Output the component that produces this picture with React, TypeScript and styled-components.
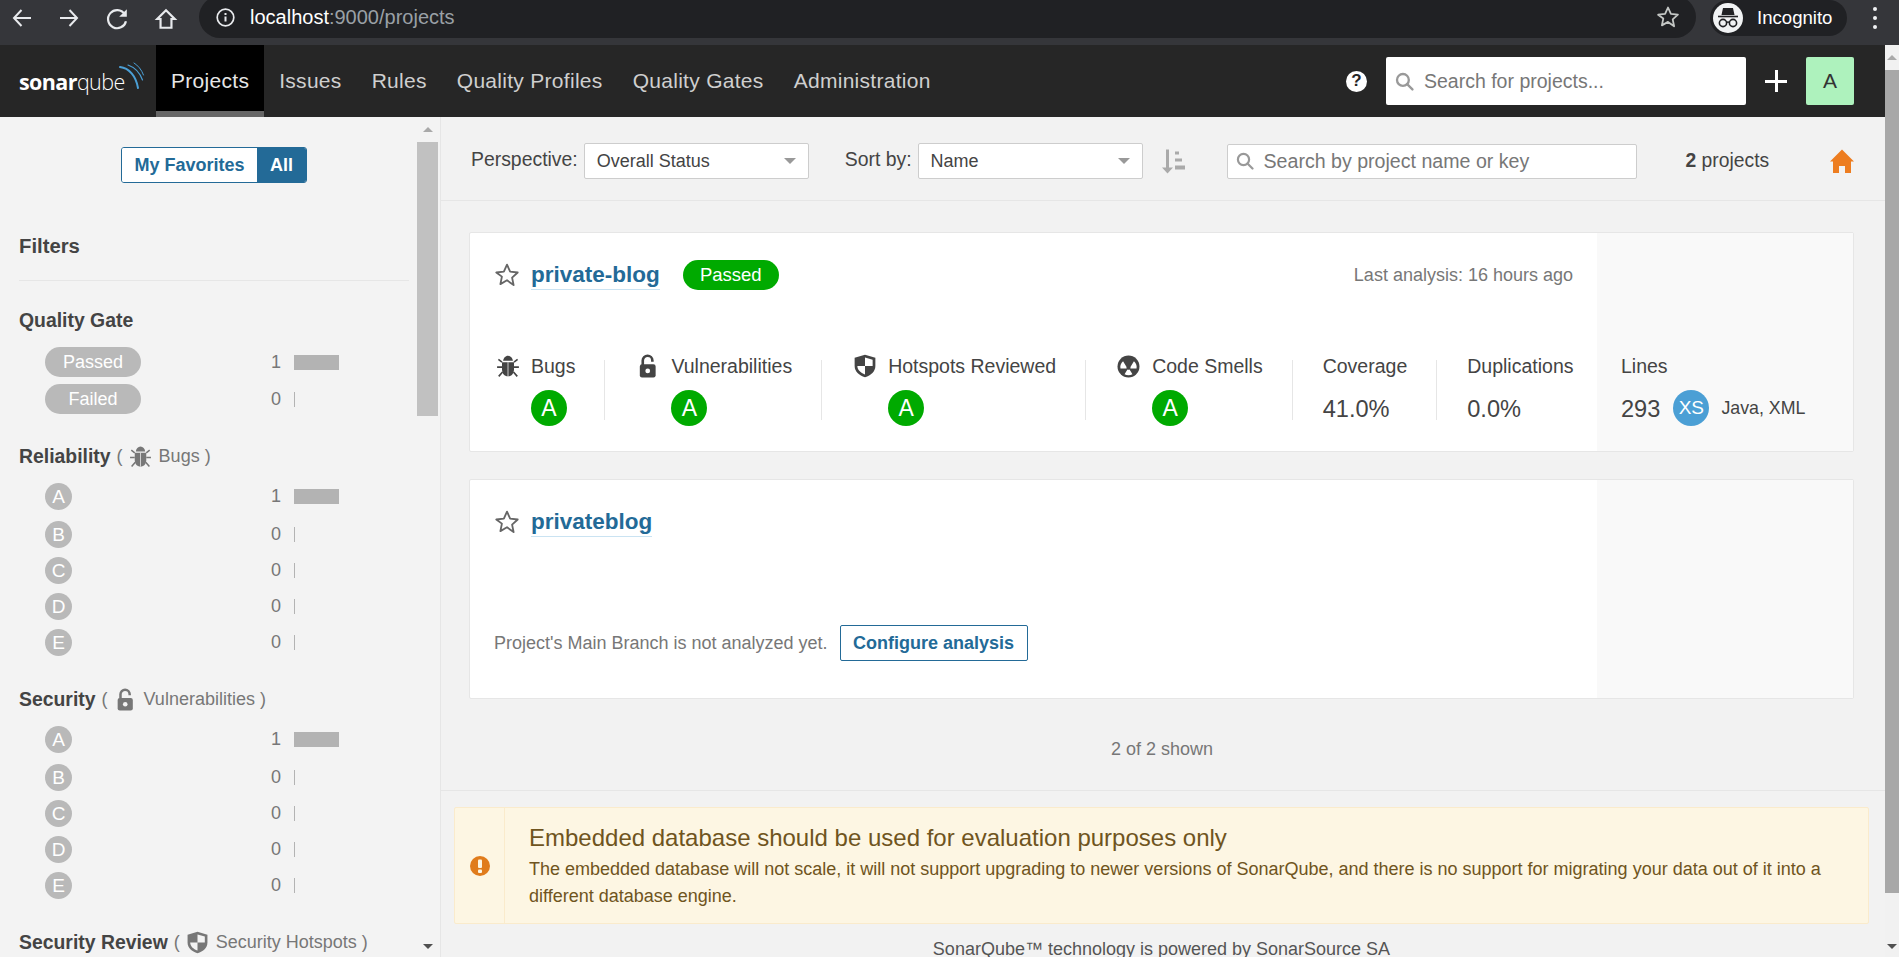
import { ReactNode } from "react";
import styled, { createGlobalStyle } from "styled-components";

const GlobalStyle = createGlobalStyle`
  html, body {
    margin: 0;
    height: 100%;
    overflow: hidden;
    background: #f3f3f3;
    font-family: "Liberation Sans", Arial, sans-serif;
    color: #444;
  }
  * { box-sizing: border-box; }
`;

const Screen = styled.div`
  width: 1899px;
  height: 957px;
  display: flex;
  flex-direction: column;
  overflow: hidden;
`;

/* browser chrome */
const BrowserBar = styled.div`
  height: 45px;
  flex: none;
  display: flex;
  background: #35363a;
  color: #fff;
`;

const NavIcons = styled.div`
  width: 199px;
  flex: none;
  display: flex;
  gap: 25px;
  padding: 7px 0 0 11px;
`;

const UrlPill = styled.div`
  width: 1497px;
  height: 42px;
  margin-top: -4px;
  border-radius: 21px;
  background: #202124;
  display: flex;
  align-items: center;
  padding: 0 16px 0 17px;
`;

const UrlText = styled.div`
  margin-left: 15px;
  flex: 1;
  font-size: 20px;
  color: #fff;
  span { color: #9aa0a6; }
`;

const ProfilePill = styled.div`
  width: 137px;
  height: 36px;
  margin-left: 14px;
  border-radius: 18px;
  background: #202124;
  display: flex;
  align-items: center;
  gap: 14px;
  padding-left: 3px;
  font-size: 18.6px;
`;

const ProfileFace = styled.div`
  width: 30px;
  height: 30px;
  border-radius: 50%;
  background: #f1f3f4;
  display: flex;
  align-items: center;
  justify-content: center;
`;

const Kebab = styled.div`
  margin: 7px 0 0 26px;
  display: flex;
  flex-direction: column;
  gap: 5px;
  i {
    width: 4px;
    height: 4px;
    border-radius: 50%;
    background: #f1f3f4;
  }
`;

const Viewport = styled.div`
  flex: 1;
  min-height: 0;
  display: flex;
`;

const Page = styled.div`
  flex: 1;
  min-width: 0;
  display: flex;
  flex-direction: column;
`;

/* top nav */
const NavBar = styled.nav`
  height: 72px;
  flex: none;
  display: flex;
  align-items: stretch;
  background: #262626;
`;

const Logo = styled.div`
  width: 156px;
  flex: none;
  display: flex;
  align-items: center;
  padding-left: 19px;
  position: relative;
  font-family: "Open Sans", sans-serif;
  font-size: 21.5px;
  letter-spacing: -0.6px;
  color: #fff;
  b { font-weight: 700; }
  span { font-weight: 300; }
  svg { position: absolute; left: 116px; top: 17px; }
`;

const NavTab = styled.a<{ $active?: boolean }>`
  display: flex;
  align-items: center;
  padding: 0 15px;
  font-size: 21px;
  letter-spacing: 0.29px;
  color: ${({ $active }) => ($active ? "#e6e6e6" : "#cfcfcf")};
  background: ${({ $active }) => ($active ? "#000" : "transparent")};
  border-bottom: 6px solid ${({ $active }) => ($active ? "#666" : "transparent")};
  padding-top: 6px;
`;

const NavRight = styled.div`
  margin-left: auto;
  display: flex;
  align-items: center;
  padding-right: 31px;
`;

const HelpIcon = styled.div`
  width: 21px;
  height: 21px;
  border-radius: 50%;
  background: #fff;
  color: #262626;
  font-size: 17px;
  font-weight: 700;
  display: flex;
  align-items: center;
  justify-content: center;
`;

const NavSearch = styled.div`
  width: 360px;
  height: 48px;
  margin-left: 19px;
  background: #fff;
  border-radius: 2px;
  display: flex;
  align-items: center;
  gap: 10px;
  padding-left: 9px;
  font-size: 19.5px;
  color: #777;
`;

const PlusIcon = styled.div`
  width: 22px;
  height: 22px;
  margin: 0 19px;
  position: relative;
  &::before, &::after {
    content: "";
    position: absolute;
    background: #fff;
  }
  &::before { left: 0; right: 0; top: 10px; height: 3px; }
  &::after { top: 0; bottom: 0; left: 10px; width: 3px; }
`;

const Avatar = styled.div`
  width: 48px;
  height: 48px;
  background: #aef2bd;
  border-radius: 2px;
  color: #333;
  font-size: 21px;
  display: flex;
  align-items: center;
  justify-content: center;
`;

const Content = styled.div`
  flex: 1;
  min-height: 0;
  display: flex;
`;

/* sidebar */
const Sidebar = styled.aside`
  width: 441px;
  flex: none;
  display: flex;
  background: #f3f3f3;
  border-right: 1px solid #e6e6e6;
  overflow: hidden;
`;

const SideContent = styled.div`
  width: 417px;
  flex: none;
  padding: 30px 8px 0 19px;
`;

const Toggle = styled.div`
  display: flex;
  width: 186px;
  height: 36px;
  margin-left: 102px;
  border: 1px solid #236a97;
  border-radius: 3px;
  overflow: hidden;
  font-size: 18px;
  font-weight: 700;
`;

const ToggleOption = styled.div<{ $on?: boolean }>`
  flex: ${({ $on }) => ($on ? "none" : 1)};
  width: ${({ $on }) => ($on ? "49px" : "auto")};
  display: flex;
  align-items: center;
  justify-content: center;
  color: ${({ $on }) => ($on ? "#fff" : "#236a97")};
  background: ${({ $on }) => ($on ? "#236a97" : "#fff")};
`;

const FiltersTitle = styled.h2`
  margin: 51px 0 0;
  padding-bottom: 22px;
  font-size: 20.3px;
  line-height: 24px;
  color: #444;
  border-bottom: 1px solid #e6e6e6;
`;

const FilterHeading = styled.h3<{ $top: number }>`
  margin: ${({ $top }) => $top}px 0 15px;
  height: 24px;
  display: flex;
  align-items: center;
  font-size: 19.4px;
  line-height: 24px;
  font-weight: 700;
  white-space: nowrap;
  color: #444;
`;

const FilterSub = styled.span`
  display: inline-flex;
  align-items: center;
  margin-left: 6px;
  font-size: 18px;
  font-weight: 400;
  color: #777;
`;

const FilterIconBox = styled.span`
  display: inline-flex;
  margin: 0 7px 0 6px;
`;

const FilterRow = styled.div<{ $tall?: boolean; $gap: number }>`
  display: flex;
  align-items: center;
  height: ${({ $tall }) => ($tall ? 30 : 27)}px;
  margin-bottom: ${({ $gap }) => $gap}px;
  padding-left: 26px;
  &:last-child { margin-bottom: 0; }
`;

const GatePill = styled.div`
  width: 96px;
  height: 30px;
  border-radius: 15px;
  background: #b9b9b9;
  color: #fff;
  font-size: 18px;
  display: flex;
  align-items: center;
  justify-content: center;
`;

const RatingDot = styled.div`
  width: 27px;
  height: 27px;
  border-radius: 50%;
  background: #b9b9b9;
  color: #fff;
  font-size: 19px;
  display: flex;
  align-items: center;
  justify-content: center;
`;

const FilterCount = styled.div`
  margin-left: auto;
  width: 30px;
  text-align: right;
  font-size: 18px;
  color: #777;
`;

const FilterBarSlot = styled.div`
  width: 115px;
  margin-left: 13px;
  flex: none;
`;

const FilterBar = styled.div<{ $full?: boolean }>`
  width: ${({ $full }) => ($full ? 45 : 1)}px;
  height: 15px;
  background: #b3b3b3;
`;

/* fake scrollbars */
const SideRail = styled.div`
  width: 21px;
  flex: none;
  display: flex;
  flex-direction: column;
  align-items: center;
  position: relative;
`;

const RailThumb = styled.div<{ $top: number; $height: number; $color: string }>`
  width: 100%;
  height: ${({ $height }) => $height}px;
  margin-top: ${({ $top }) => $top}px;
  background: ${({ $color }) => $color};
`;

const RailArrow = styled.div<{ $down?: boolean; $color: string }>`
  position: absolute;
  ${({ $down }) => ($down ? "bottom: 8px;" : "top: 10px;")}
  left: 50%;
  margin-left: -5px;
  width: 0;
  height: 0;
  border-left: 5px solid transparent;
  border-right: 5px solid transparent;
  ${({ $down, $color }) =>
    $down
      ? `border-top: 5px solid ${$color};`
      : `border-bottom: 5px solid ${$color};`}
`;

const PageRail = styled(SideRail)`
  width: 14px;
  background: #f1f1f1;
`;

/* main */
const Main = styled.main`
  flex: 1;
  min-width: 0;
  display: flex;
  flex-direction: column;
  overflow: hidden;
  background: #f2f2f2;
`;

const TopBar = styled.div`
  height: 84px;
  flex: none;
  display: flex;
  align-items: center;
  padding: 5px 0 0 30px;
  border-bottom: 1px solid #e6e6e6;
`;

const BarLabel = styled.span<{ $left?: number }>`
  margin-left: ${({ $left }) => $left ?? 0}px;
  margin-right: 6px;
  margin-top: -4px;
  font-size: 19.4px;
  color: #444;
`;

const SelectBox = styled.div<{ $width: number }>`
  width: ${({ $width }) => $width}px;
  height: 36px;
  background: #fff;
  border: 1px solid #cdcdcd;
  border-radius: 2px;
  display: flex;
  align-items: center;
  justify-content: space-between;
  padding: 0 12px 0 12px;
  font-size: 18px;
  color: #444;
  &::after {
    content: "";
    border-left: 6px solid transparent;
    border-right: 6px solid transparent;
    border-top: 6px solid #999;
  }
`;

const SortIcon = styled.div`
  margin-left: 19px;
  display: flex;
`;

const FieldSearch = styled.div`
  width: 410px;
  height: 35px;
  margin-left: 42px;
  background: #fff;
  border: 1px solid #cdcdcd;
  border-radius: 2px;
  display: flex;
  align-items: center;
  gap: 10px;
  padding-left: 8px;
  font-size: 19.6px;
  color: #777;
`;

const ProjectCount = styled.div`
  margin-left: 49px;
  font-size: 19.3px;
  color: #444;
  b { font-weight: 700; }
`;

const HomeIcon = styled.div`
  margin-left: 61px;
  display: flex;
`;

const Cards = styled.div`
  padding: 31px 31px 0 28px;
  display: flex;
  flex-direction: column;
  gap: 27px;
`;

const Card = styled.section`
  height: 220px;
  display: flex;
  background: #fff;
  border: 1px solid #e6e6e6;
  border-radius: 2px;
`;

const CardBody = styled.div`
  width: 1127px;
  flex: none;
  padding: 27px 24px 0 24px;
`;

const CardAside = styled.div`
  flex: 1;
  background: #f9f9f9;
  padding: 127px 0 0 24px;
`;

const CardHeader = styled.div`
  height: 30px;
  display: flex;
  align-items: center;
`;

const ProjectName = styled.a`
  margin-left: 11px;
  font-size: 22.5px;
  line-height: 28px;
  font-weight: 700;
  color: #236a97;
  border-bottom: 1px solid #cae3f2;
`;

const GateBadge = styled.div`
  width: 96px;
  height: 30px;
  margin-left: 23px;
  border-radius: 15px;
  background: #00aa00;
  color: #fff;
  font-size: 18.5px;
  display: flex;
  align-items: center;
  justify-content: center;
`;

const LastAnalysis = styled.div`
  margin-left: auto;
  font-size: 18px;
  color: #777;
`;

const Metrics = styled.div`
  display: flex;
  margin-top: 70px;
`;

const Metric = styled.div<{ $left: number; $last?: boolean }>`
  height: 60px;
  padding: 0 29px 0 ${({ $left }) => $left}px;
  border-right: ${({ $last }) => ($last ? "none" : "1px solid #e6e6e6")};
`;

const MetricLabel = styled.div`
  height: 12px;
  display: flex;
  align-items: center;
  font-size: 19.5px;
  white-space: nowrap;
  color: #444;
`;

const MetricIcon = styled.span`
  width: 34px;
  flex: none;
  display: flex;
  color: #444;
  svg { margin-left: -1px; }
`;

const MetricBottom = styled.div<{ $indent?: boolean }>`
  height: 36px;
  margin: 18px 0 0 ${({ $indent }) => ($indent ? 34 : 0)}px;
  display: flex;
  align-items: center;
`;

const RatingCircle = styled.div`
  width: 36px;
  height: 36px;
  border-radius: 50%;
  background: #00aa00;
  color: #fff;
  font-size: 23px;
  display: flex;
  align-items: center;
  justify-content: center;
`;

const SizeCircle = styled(RatingCircle)`
  margin-left: 13px;
  background: #4b9fd5;
  font-size: 19px;
`;

const MetricValue = styled.div`
  padding-top: 2px;
  font-size: 23.6px;
  color: #444;
`;

const LinesLang = styled.div`
  margin-left: 12px;
  font-size: 17.8px;
  color: #444;
  white-space: nowrap;
`;

const NotAnalyzed = styled.div`
  margin-top: 88px;
  display: flex;
  align-items: center;
  font-size: 18px;
  color: #777;
`;

const ConfigureButton = styled.a`
  width: 188px;
  height: 36px;
  margin-left: 12px;
  border: 1px solid #236a97;
  border-radius: 2px;
  background: #fff;
  color: #236a97;
  font-size: 18px;
  font-weight: 700;
  display: flex;
  align-items: center;
  justify-content: center;
`;

const ShownCount = styled.div`
  height: 24px;
  margin-top: 38px;
  padding-right: 2px;
  text-align: center;
  font-size: 18px;
  line-height: 24px;
  color: #777;
`;

const Footer = styled.footer`
  margin-top: 29px;
  padding: 16px 16px 0 13px;
  border-top: 1px solid #e6e6e6;
`;

const WarningBox = styled.div`
  height: 117px;
  display: flex;
  background: #fdf6e3;
  border: 1px solid #faebcc;
  border-radius: 2px;
`;

const WarningIcon = styled.div`
  width: 50px;
  flex: none;
  display: flex;
  align-items: center;
  justify-content: center;
  border-right: 1px solid #faebcc;
`;

const WarningText = styled.div`
  padding: 15px 0 0 24px;
  color: #6f5420;
`;

const WarningTitle = styled.div`
  font-size: 24px;
  line-height: 30px;
`;

const WarningBody = styled.div`
  margin-top: 3px;
  font-size: 18px;
  line-height: 27px;
`;

const PoweredBy = styled.div`
  margin-top: 13px;
  text-align: center;
  font-size: 18px;
  line-height: 24px;
  color: #555;
`;

/* icons */
const ArrowLeft = ({ flip }: { flip?: boolean }) => (
  <svg width="22" height="22" viewBox="0 0 22 22" fill="none" stroke="#e8eaed" strokeWidth="2"
    style={flip ? { transform: "scaleX(-1)" } : undefined}>
    <path d="M20 11H3M10.5 3 3 11l7.5 8" />
  </svg>
);

const ReloadIcon = () => (
  <svg width="24" height="24" viewBox="0 0 22 22" fill="none">
    <path d="M18 6.5A8.3 8.3 0 1 0 19.2 13" stroke="#e8eaed" strokeWidth="2" />
    <path d="M20 2v7h-7z" fill="#e8eaed" />
  </svg>
);

const BrowserHome = () => (
  <svg width="24" height="24" viewBox="0 0 22 22" fill="none" stroke="#e8eaed" strokeWidth="2">
    <path d="M11 3 3 11h3v8h10v-8h3z" />
  </svg>
);

const InfoIcon = () => (
  <svg width="19" height="19" viewBox="0 0 19 19" fill="none">
    <circle cx="9.5" cy="9.5" r="8.3" stroke="#e8eaed" strokeWidth="1.7" />
    <path d="M9.5 8.5v5M9.5 5v2" stroke="#e8eaed" strokeWidth="2" />
  </svg>
);

const OutlineStar = ({ size, color, width }: { size: number; color: string; width: number }) => (
  <svg width={size} height={size} viewBox="0 0 24 24" fill="none" stroke={color} strokeWidth={width} strokeLinejoin="round">
    <path d="M12 2.5l2.9 6.4 7 .8-5.2 4.7 1.4 6.9L12 16.9l-6.1 3.5 1.4-6.9L2.1 9.7l7-.8z" />
  </svg>
);

const IncognitoFace = () => (
  <svg width="24" height="22" viewBox="0 0 24 22" fill="none">
    <path d="M7 1h10l1.5 7h-13z" fill="#202124" />
    <path d="M2 9.5h20" stroke="#202124" strokeWidth="1.6" />
    <circle cx="7" cy="16" r="3.6" stroke="#202124" strokeWidth="1.6" />
    <circle cx="17" cy="16" r="3.6" stroke="#202124" strokeWidth="1.6" />
    <path d="M10.5 15.5c1-.7 2-.7 3 0" stroke="#202124" strokeWidth="1.4" />
  </svg>
);

const SearchGlass = ({ size }: { size: number }) => (
  <svg width={size} height={size} viewBox="0 0 18 18" fill="none" stroke="#999" strokeWidth="2.2">
    <circle cx="7.5" cy="7.5" r="5.6" />
    <path d="M11.5 11.5 16.5 16.5" strokeLinecap="round" />
  </svg>
);

const BugIcon = ({ size, color = "#444" }: { size: number; color?: string }) => (
  <svg width={size} height={size} viewBox="0 0 22 22" fill="none">
    <path d="M6.5 6.2C6.8 3.6 8.6 1.5 11 1.5s4.2 2.1 4.5 4.7z" fill={color} />
    <path d="M5.5 7.5h11V14c0 3.8-2 6.5-5.5 6.5S5.500 17.800 5.500 14z" fill={color} />
    <path d="M11 7.500v13" stroke="#fff" strokeWidth="1" opacity="0.65" />
    <path d="M5.500 7.500 2.200 5M16.500 7.500 19.800 5M5.500 12H1M16.500 12H21M6 16.500l-3.500 4M16 16.500l3.500 4" stroke={color} strokeWidth="1.500" />
  </svg>
);

const LockIcon = ({ size, color = "#444", hole = "#fff" }: { size: number; color?: string; hole?: string }) => (
  <svg width={size} height={size} viewBox="0 0 22 22" fill="none">
    <path d="M6.200 10V6a4.400 4.400 0 0 1 8.800 0v1" stroke={color} strokeWidth="2.400" />
    <rect x="3.500" y="9.500" width="14.500" height="12" rx="2" fill={color} />
    <circle cx="10.750" cy="15.500" r="2.200" fill={hole} />
  </svg>
);

const ShieldIcon = ({ size, color = "#444", hole = "#fff" }: { size: number; color?: string; hole?: string }) => (
  <svg width={size} height={size} viewBox="0 0 22 22">
    <path d="M11 .8 20.500 3.500v7.500c0 5-4 8.700-9.500 10.200C5.500 19.700 1.500 16 1.500 11V3.500z" fill={color} />
    <path d="M11 3.300 18 5.200V11h-7zM11 11v7.700C7 17.400 4 14.500 4 11z" fill={hole} />
  </svg>
);

const SmellIcon = ({ size }: { size: number }) => (
  <svg width={size} height={size} viewBox="0 0 22 22">
    <circle cx="11" cy="11" r="10.500" fill="#444" />
    <path d="M3.300 12.800h5.900l-.2-1.500L5.800 6c-2 1.800-3 4.200-2.500 6.800zM18.700 12.800h-5.900l.2-1.500L16.200 6c2 1.800 3 4.200 2.500 6.800zM7.200 18.400 10 13.900c.7.300 1.300.3 2 0l2.800 4.500c-2.300 1.200-5.300 1.200-7.600 0z" fill="#fff" />
  </svg>
);

const SortGlyph = () => (
  <svg width="23" height="25" viewBox="0 0 23 24">
    <path d="M4 0h3v18h4l-5.500 6L0 18h4z" fill="#aaa" />
    <path d="M13 2h4v3h-4zM13 9h7v3h-7zM13 16h10v4H13z" fill="#aaa" />
  </svg>
);

const OrangeHome = () => (
  <svg width="24" height="24" viewBox="0 0 24 24">
    <path d="M12 .5 24 12.500h-3V24h-6v-7H9v7H3V12.500H0z" fill="#ed7d20" />
  </svg>
);

const WarningGlyph = () => (
  <svg width="20" height="20" viewBox="0 0 20 20">
    <circle cx="10" cy="10" r="10" fill="#e07c1c" />
    <rect x="8" y="3.500" width="4" height="8.500" rx="1" fill="#fdf6e3" />
    <rect x="8" y="13.500" width="4" height="3.500" rx="1" fill="#fdf6e3" />
  </svg>
);

const LogoArcs = () => (
  <svg width="30" height="30" viewBox="0 0 30 30" fill="none" strokeLinecap="round">
    <path d="M4 5c9 1 16 9 18 21" stroke="#4b9fd5" strokeWidth="2" />
    <path d="M12 3c7 2.500 12 8 14.500 15" stroke="#4b9fd5" strokeWidth="1.200" />
    <path d="M18 1c4 2.500 7.500 6.500 9.500 12" stroke="#4b9fd5" strokeWidth="1" />
  </svg>
);

type RatingRow = { grade: string; count: number };

const ratingRows: RatingRow[] = [
  { grade: "A", count: 1 },
  { grade: "B", count: 0 },
  { grade: "C", count: 0 },
  { grade: "D", count: 0 },
  { grade: "E", count: 0 },
];

const navItems = ["Projects", "Issues", "Rules", "Quality Profiles", "Quality Gates", "Administration"];

const RatingRows = () => (
  <>
    {ratingRows.map((row, i) => (
      <FilterRow key={row.grade} $gap={i === 0 ? 11 : 9}>
        <RatingDot>{row.grade}</RatingDot>
        <FilterCount>{row.count}</FilterCount>
        <FilterBarSlot>
          <FilterBar $full={row.count > 0} />
        </FilterBarSlot>
      </FilterRow>
    ))}
  </>
);

const Sub = ({ icon, label }: { icon: ReactNode; label: string }) => (
  <FilterSub>
    (<FilterIconBox>{icon}</FilterIconBox>
    {label}&nbsp;)
  </FilterSub>
);

const RatedMetric = ({ icon, label, left = 32 }: { icon: ReactNode; label: string; left?: number }) => (
  <Metric $left={left}>
    <MetricLabel>
      <MetricIcon>{icon}</MetricIcon>
      {label}
    </MetricLabel>
    <MetricBottom $indent>
      <RatingCircle>A</RatingCircle>
    </MetricBottom>
  </Metric>
);

const ValueMetric = ({ label, value, last }: { label: string; value: string; last?: boolean }) => (
  <Metric $left={30} $last={last}>
    <MetricLabel>{label}</MetricLabel>
    <MetricBottom>
      <MetricValue>{value}</MetricValue>
    </MetricBottom>
  </Metric>
);

export default function App() {
  return (
    <Screen>
      <GlobalStyle />
      <BrowserBar>
        <NavIcons>
          <ArrowLeft />
          <ArrowLeft flip />
          <ReloadIcon />
          <BrowserHome />
        </NavIcons>
        <UrlPill>
          <InfoIcon />
          <UrlText>
            localhost<span>:9000/projects</span>
          </UrlText>
          <OutlineStar size={24} color="#c4c7c5" width={1.8} />
        </UrlPill>
        <ProfilePill>
          <ProfileFace>
            <IncognitoFace />
          </ProfileFace>
          Incognito
        </ProfilePill>
        <Kebab>
          <i />
          <i />
          <i />
        </Kebab>
      </BrowserBar>

      <Viewport>
        <Page>
          <NavBar>
            <Logo>
              <b>sonar</b>
              <span>qube</span>
              <LogoArcs />
            </Logo>
            {navItems.map((item, i) => (
              <NavTab key={item} $active={i === 0}>
                {item}
              </NavTab>
            ))}
            <NavRight>
              <HelpIcon>?</HelpIcon>
              <NavSearch>
                <SearchGlass size={19} />
                Search for projects...
              </NavSearch>
              <PlusIcon />
              <Avatar>A</Avatar>
            </NavRight>
          </NavBar>

          <Content>
            <Sidebar>
              <SideContent>
                <Toggle>
                  <ToggleOption>My Favorites</ToggleOption>
                  <ToggleOption $on>All</ToggleOption>
                </Toggle>
                <FiltersTitle>Filters</FiltersTitle>

                <FilterHeading $top={27}>Quality Gate</FilterHeading>
                <FilterRow $tall $gap={7}>
                  <GatePill>Passed</GatePill>
                  <FilterCount>1</FilterCount>
                  <FilterBarSlot>
                    <FilterBar $full />
                  </FilterBarSlot>
                </FilterRow>
                <FilterRow $tall $gap={0}>
                  <GatePill>Failed</GatePill>
                  <FilterCount>0</FilterCount>
                  <FilterBarSlot>
                    <FilterBar />
                  </FilterBarSlot>
                </FilterRow>

                <FilterHeading $top={30}>
                  Reliability
                  <Sub icon={<BugIcon size={23} color="#777" />} label="Bugs" />
                </FilterHeading>
                <RatingRows />

                <FilterHeading $top={31}>
                  Security
                  <Sub icon={<LockIcon size={23} color="#777" hole="#f3f3f3" />} label="Vulnerabilities" />
                </FilterHeading>
                <RatingRows />

                <FilterHeading $top={31}>
                  Security Review
                  <Sub icon={<ShieldIcon size={23} color="#777" hole="#f3f3f3" />} label="Security Hotspots" />
                </FilterHeading>
              </SideContent>
              <SideRail>
                <RailArrow $color="#a9a9a9" />
                <RailThumb $top={25} $height={274} $color="#c1c1c1" />
                <RailArrow $down $color="#505050" />
              </SideRail>
            </Sidebar>

            <Main>
              <TopBar>
                <BarLabel>Perspective:</BarLabel>
                <SelectBox $width={225}>Overall Status</SelectBox>
                <BarLabel $left={36}>Sort by:</BarLabel>
                <SelectBox $width={225}>Name</SelectBox>
                <SortIcon>
                  <SortGlyph />
                </SortIcon>
                <FieldSearch>
                  <SearchGlass size={18} />
                  Search by project name or key
                </FieldSearch>
                <ProjectCount>
                  <b>2</b> projects
                </ProjectCount>
                <HomeIcon>
                  <OrangeHome />
                </HomeIcon>
              </TopBar>

              <Cards>
                <Card>
                  <CardBody>
                    <CardHeader>
                      <OutlineStar size={26} color="#666" width={1.7} />
                      <ProjectName>private-blog</ProjectName>
                      <GateBadge>Passed</GateBadge>
                      <LastAnalysis>Last analysis: 16 hours ago</LastAnalysis>
                    </CardHeader>
                    <Metrics>
                      <RatedMetric left={3} icon={<BugIcon size={24} />} label="Bugs" />
                      <RatedMetric icon={<LockIcon size={24} />} label="Vulnerabilities" />
                      <RatedMetric icon={<ShieldIcon size={24} />} label="Hotspots Reviewed" />
                      <RatedMetric icon={<SmellIcon size={23} />} label="Code Smells" />
                      <ValueMetric label="Coverage" value="41.0%" />
                      <ValueMetric last label="Duplications" value="0.0%" />
                    </Metrics>
                  </CardBody>
                  <CardAside>
                    <MetricLabel>Lines</MetricLabel>
                    <MetricBottom>
                      <MetricValue>293</MetricValue>
                      <SizeCircle>XS</SizeCircle>
                      <LinesLang>Java, XML</LinesLang>
                    </MetricBottom>
                  </CardAside>
                </Card>

                <Card>
                  <CardBody>
                    <CardHeader>
                      <OutlineStar size={26} color="#666" width={1.7} />
                      <ProjectName>privateblog</ProjectName>
                    </CardHeader>
                    <NotAnalyzed>
                      Project's Main Branch is not analyzed yet.
                      <ConfigureButton>Configure analysis</ConfigureButton>
                    </NotAnalyzed>
                  </CardBody>
                  <CardAside />
                </Card>
              </Cards>

              <ShownCount>2 of 2 shown</ShownCount>

              <Footer>
                <WarningBox>
                  <WarningIcon>
                    <WarningGlyph />
                  </WarningIcon>
                  <WarningText>
                    <WarningTitle>Embedded database should be used for evaluation purposes only</WarningTitle>
                    <WarningBody>
                      The embedded database will not scale, it will not support upgrading to newer versions of SonarQube, and there is no support for migrating your data out of it into a different database engine.
                    </WarningBody>
                  </WarningText>
                </WarningBox>
                <PoweredBy>SonarQube™ technology is powered by SonarSource SA</PoweredBy>
              </Footer>
            </Main>
          </Content>
        </Page>

        <PageRail>
          <RailArrow $color="#a9a9a9" />
          <RailThumb $top={25} $height={823} $color="#a8a8a8" />
          <RailArrow $down $color="#505050" />
        </PageRail>
      </Viewport>
    </Screen>
  );
}
